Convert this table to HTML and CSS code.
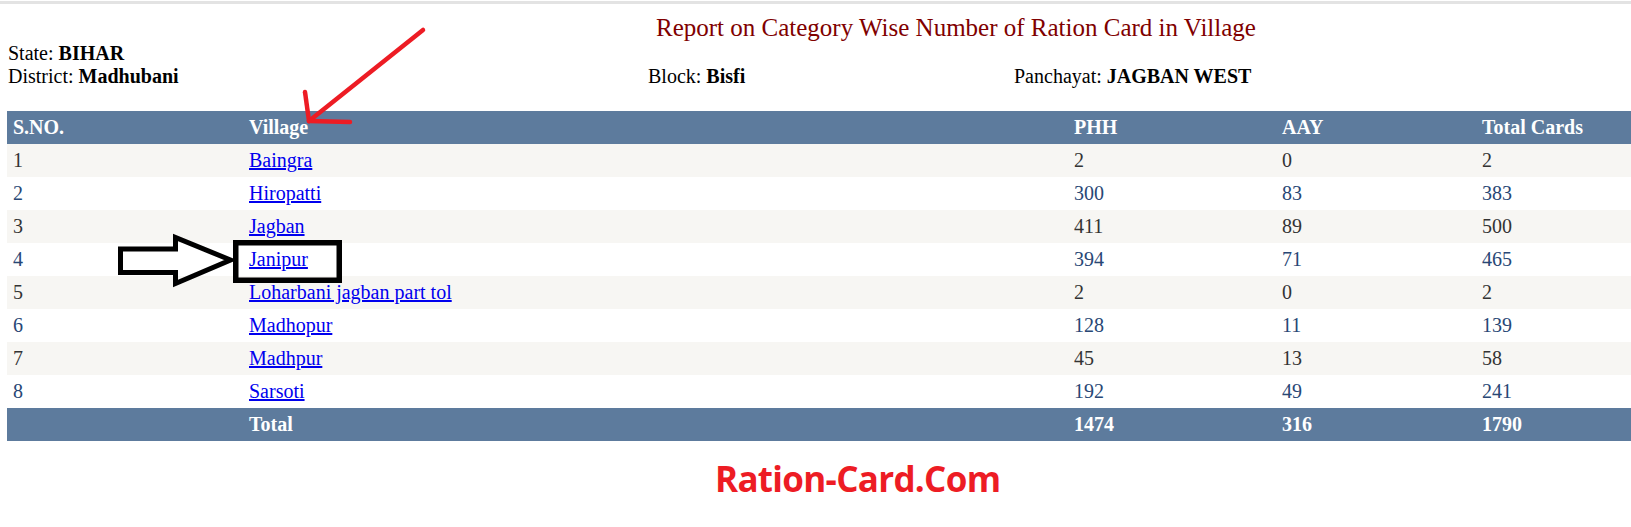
FILE: index.html
```html
<!DOCTYPE html>
<html>
<head>
<meta charset="utf-8">
<title>Report on Category Wise Number of Ration Card in Village</title>
<link rel="stylesheet" href="styles.css">
</head>
<body>
<div class="topline"></div>
<div class="page">
  <h1 class="title">Report on Category Wise Number of Ration Card in Village</h1>
  <div class="info">
    <div class="info-line">State: <b>BIHAR</b></div>
    <div class="info-row">
      <div class="col-district">District: <b>Madhubani</b></div>
      <div class="col-block">Block: <b>Bisfi</b></div>
      <div class="col-panchayat">Panchayat: <b>JAGBAN WEST</b></div>
    </div>
  </div>
  <table class="report">
    <colgroup>
      <col class="c-sno"><col class="c-village"><col class="c-phh"><col class="c-aay"><col class="c-total">
    </colgroup>
    <thead>
      <tr class="head"><th>S.NO.</th><th>Village</th><th>PHH</th><th>AAY</th><th>Total Cards</th></tr>
    </thead>
    <tbody>
      <tr class="row"><td>1</td><td><a href="#">Baingra</a></td><td>2</td><td>0</td><td>2</td></tr>
      <tr class="alt"><td>2</td><td><a href="#">Hiropatti</a></td><td>300</td><td>83</td><td>383</td></tr>
      <tr class="row"><td>3</td><td><a href="#">Jagban</a></td><td>411</td><td>89</td><td>500</td></tr>
      <tr class="alt"><td>4</td><td><a href="#">Janipur</a></td><td>394</td><td>71</td><td>465</td></tr>
      <tr class="row"><td>5</td><td><a href="#">Loharbani jagban part tol</a></td><td>2</td><td>0</td><td>2</td></tr>
      <tr class="alt"><td>6</td><td><a href="#">Madhopur</a></td><td>128</td><td>11</td><td>139</td></tr>
      <tr class="row"><td>7</td><td><a href="#">Madhpur</a></td><td>45</td><td>13</td><td>58</td></tr>
      <tr class="alt"><td>8</td><td><a href="#">Sarsoti</a></td><td>192</td><td>49</td><td>241</td></tr>
    </tbody>
    <tfoot>
      <tr class="foot"><td></td><td>Total</td><td>1474</td><td>316</td><td>1790</td></tr>
    </tfoot>
  </table>
  <div class="brand">Ration-Card.Com</div>
</div>
<svg class="annot" width="1631" height="527" viewBox="0 0 1631 527">
  <g class="red-arrow">
    <line x1="423" y1="30" x2="309" y2="121"/>
    <line x1="305" y1="92" x2="309" y2="121"/>
    <line x1="309" y1="121" x2="350" y2="122"/>
  </g>
  <polygon class="black-arrow" points="120.5,249 175.5,249 175.5,237.5 230.5,260 175.5,283.5 175.5,272.5 120.5,272.5"/>
  <rect class="black-box" x="235.75" y="242.75" width="103.5" height="37.5"/>
</svg>
</body>
</html>
```
FILE: styles.css
```css
html, body {
  margin: 0;
  padding: 0;
  background: #ffffff;
}
body {
  position: relative;
  width: 1631px;
  height: 527px;
  overflow: hidden;
  font-family: "Liberation Serif", "Times New Roman", serif;
  font-size: 20px;
  color: #000000;
}
.topline {
  margin-top: 1px;
  height: 3px;
  background: #e3e3e3;
}
.page {
  padding-top: 10px;
}
.title {
  margin: 0;
  padding-left: 656px;
  font-size: 25px;
  font-weight: normal;
  color: #800000;
  line-height: normal;
}
.info {
  padding-left: 8px;
  line-height: 23px;
}
.info-row {
  display: flex;
}
.col-district {
  width: 640px;
}
.col-block {
  width: 366px;
}
.report {
  margin-top: 23px;
  margin-left: 7px;
  width: 1624px;
  border-collapse: collapse;
  table-layout: fixed;
}
.c-sno { width: 236px; }
.c-village { width: 825px; }
.c-phh { width: 208px; }
.c-aay { width: 200px; }
.c-total { width: 155px; }
.report th,
.report td {
  padding: 5px 6px;
  line-height: 23px;
  text-align: left;
  white-space: nowrap;
}
.head,
.foot {
  background: #5d7b9d;
  color: #ffffff;
  font-weight: bold;
}
.row {
  background: #f7f6f3;
  color: #333333;
}
.alt {
  background: #ffffff;
  color: #284775;
}
.report a {
  color: #0000ee;
  text-decoration: underline;
}
.brand {
  margin-top: 14px;
  padding-left: 715px;
  font-family: "Open Sans", "Noto Sans", sans-serif;
  font-weight: bold;
  font-size: 35px;
  letter-spacing: -0.7px;
  color: #ed1c24;
  line-height: normal;
}
.annot {
  position: absolute;
  left: 0;
  top: 0;
  pointer-events: none;
}
.red-arrow line {
  stroke: #ed1c24;
  stroke-width: 4.5;
  stroke-linecap: round;
}
.black-arrow {
  fill: none;
  stroke: #000000;
  stroke-width: 5;
  stroke-linejoin: miter;
}
.black-box {
  fill: none;
  stroke: #000000;
  stroke-width: 5.5;
}
```
